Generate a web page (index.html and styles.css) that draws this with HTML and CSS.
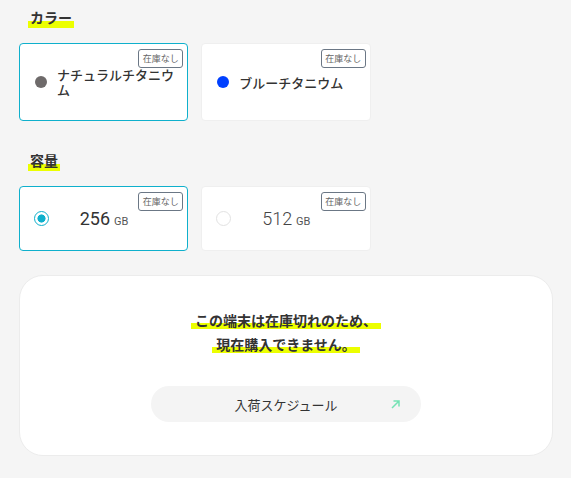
FILE: index.html
```html
<!DOCTYPE html>
<html lang="ja">
<head>
<meta charset="utf-8">
<title>在庫状況</title>
<link rel="stylesheet" href="styles.css">
</head>
<body>
<main class="page">
  <section class="group">
    <h2 class="group-title"><span class="marker">カラー</span></h2>
    <div class="options options--color">
      <div class="option option--selected">
        <span class="swatch swatch--natural"></span>
        <span class="option-label">ナチュラルチタニウム</span>
        <span class="badge">在庫なし</span>
      </div>
      <div class="option">
        <span class="swatch swatch--blue"></span>
        <span class="option-label">ブルーチタニウム</span>
        <span class="badge">在庫なし</span>
      </div>
    </div>
  </section>

  <section class="group group--capacity">
    <h2 class="group-title"><span class="marker">容量</span></h2>
    <div class="options options--capacity">
      <div class="option option--selected">
        <span class="radio radio--checked"></span>
        <span class="capacity"><span class="capacity-num">256</span> <span class="capacity-unit">GB</span></span>
        <span class="badge">在庫なし</span>
      </div>
      <div class="option">
        <span class="radio"></span>
        <span class="capacity capacity--muted"><span class="capacity-num">512</span> <span class="capacity-unit">GB</span></span>
        <span class="badge">在庫なし</span>
      </div>
    </div>
  </section>

  <section class="notice">
    <p class="notice-text"><span class="notice-marker">この端末は在庫切れのため、<br>現在購入できません。</span></p>
    <a class="schedule-btn" href="#">
      <span class="schedule-label">入荷スケジュール</span>
      <svg class="schedule-icon" width="9" height="9" viewBox="0 0 9 9" aria-hidden="true">
        <path d="M1 8 L8 1 M2.5 1 H8 V6.5" fill="none" stroke="#74e2b4" stroke-width="1.5"/>
      </svg>
    </a>
  </section>
</main>
</body>
</html>
```

FILE: styles.css
```css
* {
  box-sizing: border-box;
}

body {
  margin: 0;
  background: #f5f5f5;
  font-family: "Noto Sans CJK JP", "Noto Sans", sans-serif;
  color: #333;
}

.page {
  padding: 6px 18px 0 19px;
}

.group-title {
  margin: 0 0 15px;
  padding-left: 9px;
  font-size: 14px;
  font-weight: 700;
  line-height: 22px;
}

.marker {
  display: inline-block;
  padding: 0 2px;
  background: linear-gradient(to bottom, transparent 15px, #ecff00 15px);
}

.group--capacity {
  margin-top: 28px;
}

.options {
  display: grid;
  grid-template-columns: repeat(3, 1fr);
  gap: 13px;
}

.option {
  position: relative;
  display: flex;
  align-items: center;
  background: #fff;
  border: 1px solid #efefef;
  border-radius: 4px;
  padding: 0 12px 0 15px;
}

.options--color .option {
  height: 78px;
}

.options--capacity .option {
  height: 65px;
  padding-left: 14px;
}

.option--selected {
  border-color: #0fb0cc;
}

.swatch {
  flex: 0 0 12px;
  width: 12px;
  height: 12px;
  border-radius: 50%;
  margin-right: 10px;
}

.swatch--natural {
  background: #6e6a6a;
}

.swatch--blue {
  background: #0040ff;
}

.option-label {
  flex: 1;
  font-size: 13px;
  font-weight: 500;
  line-height: 15px;
  color: #333;
}

.badge {
  position: absolute;
  top: 5px;
  right: 4px;
  padding: 0 3.5px;
  border: 1px solid #6b7785;
  border-radius: 3px;
  background: #fff;
  font-size: 9px;
  line-height: 17px;
  color: #666;
}

.radio {
  flex: 0 0 15px;
  width: 15px;
  height: 15px;
  border-radius: 50%;
  border: 1px solid #e2e2e2;
  background: #fff;
}

.radio--checked {
  border: 1.5px solid #0fb0cc;
  background: radial-gradient(circle, #0fb0cc 0 3.8px, #fff 4.3px);
}

.capacity {
  width: 78px;
  margin-left: 16px;
  text-align: center;
  font-family: Roboto, "Noto Sans", sans-serif;
  color: #333;
  white-space: nowrap;
}

.capacity-num {
  font-size: 18px;
  font-weight: 400;
}

.capacity-unit {
  font-size: 11px;
  font-weight: 400;
  color: #555;
}

.capacity--muted .capacity-num {
  font-weight: 300;
  color: #444;
}

.notice {
  margin-top: 24px;
  background: #fff;
  border: 1px solid #ececec;
  border-radius: 24px;
  padding: 32px 0 33px;
  text-align: center;
}

.notice-text {
  margin: 0 0 30px;
  font-size: 14px;
  font-weight: 700;
  line-height: 24px;
  color: #333;
}

.notice-marker {
  padding: 0 4px;
  -webkit-box-decoration-break: clone;
  box-decoration-break: clone;
  background: linear-gradient(to bottom, transparent 13px, #ecff00 13px, #ecff00 19px, transparent 19px);
}

.schedule-btn {
  position: relative;
  display: flex;
  align-items: center;
  justify-content: center;
  width: 270px;
  height: 36px;
  margin: 0 auto;
  border-radius: 18px;
  background: #f4f4f4;
  text-decoration: none;
  color: #333;
  font-size: 13px;
}

.schedule-icon {
  position: absolute;
  right: 21px;
  top: 14px;
}
```
